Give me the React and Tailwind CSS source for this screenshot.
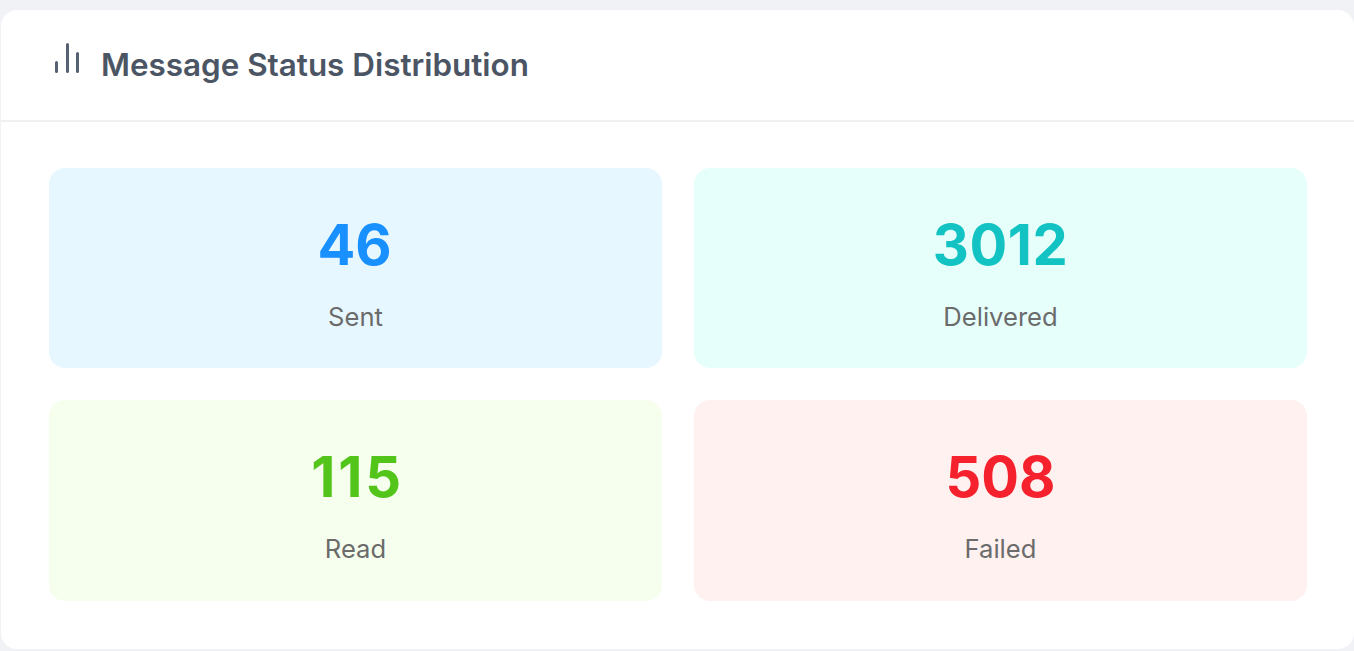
const stats = [
  { value: "46", label: "Sent", box: "bg-[#e6f7ff]", text: "text-[#1890ff] mr-[2px]" },
  { value: "3012", label: "Delivered", box: "bg-[#e6fffb]", text: "text-[#13c2c2] tracking-[0.01em]" },
  { value: "115", label: "Read", box: "bg-[#f6ffed]", text: "text-[#52c41a] tracking-[0.05em] ml-[4px]" },
  { value: "508", label: "Failed", box: "bg-[#fff1f0]", text: "text-[#f5222d]" },
];

export default function App() {
  return (
    <div className="h-[651px] overflow-hidden bg-[#f0f2f5] pt-[10px] pb-[2px] pl-px font-['Inter',sans-serif]">
      <div className="h-full rounded-2xl bg-white">
        {/* header */}
        <div className="flex h-[112px] items-center gap-[20px] border-b-2 border-[#f0f0f0] pl-[49px]">
          <svg width="31" height="32" viewBox="0 0 31 32" className="mb-[14px] text-[#566173]" fill="none" stroke="currentColor" strokeWidth="3" strokeLinecap="round">
            <path d="M6.5 20.5v9M17.5 2.5v27M27.5 11.5v18" />
          </svg>
          <h2 className="mt-[2px] text-[31.4px] font-[560] leading-none text-[#4b5563]">Message Status Distribution</h2>
        </div>
        {/* stats */}
        <div className="grid grid-cols-2 gap-8 pt-[46px] pr-[47px] pl-12">
          {stats.map((s) => (
            <div key={s.label} className={`flex h-[200.4px] flex-col items-center rounded-2xl ${s.box}`}>
              <div className={`mt-[43px] text-[56px] leading-[68px] font-bold ${s.text}`}>{s.value}</div>
              <div className="mt-[22px] text-[25.6px] leading-8 text-[#6b6b6b]">{s.label}</div>
            </div>
          ))}
        </div>
      </div>
    </div>
  );
}
